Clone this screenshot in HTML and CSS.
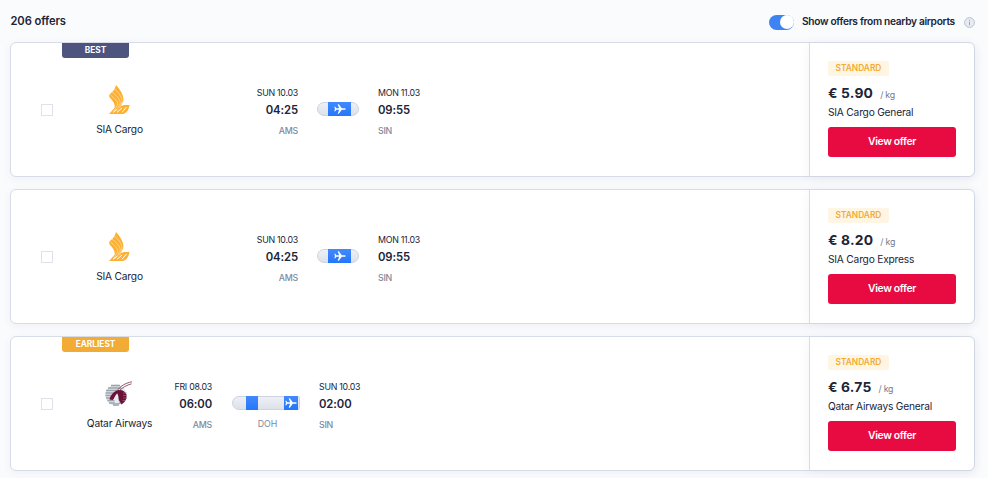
FILE: index.html
```html
<!DOCTYPE html>
<html lang="en">
<head>
<meta charset="utf-8">
<title>Offers</title>
<link rel="stylesheet" href="styles.css">
</head>
<body>
<svg class="defs" width="0" height="0">
  <symbol id="plane" viewBox="0 0 12 10"><path d="M.3 2.8h1l1 1.4h2.8L3.7.2h1.1l3 4h2.700c1.600 0 1.600 1.600 0 1.600H7.800l-3 4H3.700l1.400-4H2.300l-1 1.400h-1L1 5z" fill="#fff"/></symbol>
  <symbol id="sia" viewBox="0 0 22 30">
    <path d="M8 0C12 4 15 9 15.500 14C15.700 17 13 20 12 23L5 27C8 21 7 19 3 14C0 11 1 10 3 8C6 6 7 3 8 0Z" fill="#fdb134"/>
    <path d="M1 29L6 23.500L16 20H21.500C21 24 19 28 15 29Z" fill="#fdb134"/>
    <path d="M2.500 10C6 13 11 17 9.500 20L6 26M4 7C9 11 13 15 12 19L9 25M6.500 4C11 8 15 13 13.700 18L11.500 23" fill="none" stroke="#ffe3b0" stroke-width=".7"/>
    <path d="M5 27.300L9 24.500M9 27.300L14 23M14 27.300L18.500 22" fill="none" stroke="#fff" stroke-width="1"/>
  </symbol>
  <symbol id="qatar" viewBox="0 0 28 26">
    <circle cx="10.800" cy="14" r="10.500" fill="#e1e4e8"/>
    <path d="M6 4.500h9M3 7h13M1 9.500h13M.5 12h10M.5 14.500h6M1 17h5M2.500 19.500h12M4 22h12M8 24h6" stroke="#9aa2ac" stroke-width="1.300"/>
    <path d="M9 18L11 13.500L13 13L14 22H10Z" fill="#e9ebee"/>
    <path d="M4.500 18.500C5.500 14 9 10 13.500 9C17 8.500 20 10 21.500 13.500V17.500L19.500 21L16.500 23.500C15.500 21 13 19 13.500 16L12.500 12.500C10 13.500 9.500 18 7.500 19Z" fill="#6b1137"/>
    <path d="M12 10C15 5.500 20 2 27 .8M14.500 9.500C17.500 6.500 22 4 26.500 2.800" fill="none" stroke="#8a4764" stroke-width=".9"/>
    <path d="M18 12h4M18 14.500h4M18 17h4M17.500 19.500h3" stroke="#b58a9d" stroke-width=".5"/>
  </symbol>
</svg>
<header class="top">
  <h1 class="count">206 offers</h1>
  <div class="nearby">
    <span class="toggle"><span class="knob"></span></span>
    <span class="nearby-label">Show offers from nearby airports</span>
    <svg class="info" viewBox="0 0 11 11"><circle cx="5.500" cy="5.500" r="4.900" fill="#e8ebf1" stroke="#b9c2cd"/><path d="M5.500 2.800v1M5.500 4.700v3.500" stroke="#9ba6b8"/></svg>
  </div>
</header>
<main class="offers">
  <article class="card">
    <div class="main">
      <span class="check"></span>
      <div class="airline"><span class="ribbon best">BEST</span><svg class="logo sia"><use href="#sia"/></svg><span class="airline-name">SIA Cargo</span></div>
      <div class="stop from"><span class="date">SUN 10.03</span><span class="time">04:25</span><span class="code">AMS</span></div>
      <div class="route"><div class="bar"><span class="flight"><svg class="plane"><use href="#plane"/></svg></span></div></div>
      <div class="stop"><span class="date">MON 11.03</span><span class="time">09:55</span><span class="code">SIN</span></div>
    </div>
    <div class="price">
      <span class="tag">STANDARD</span>
      <div class="amount"><b class="value">€ 5.90</b><span class="unit">/ kg</span></div>
      <span class="product">SIA Cargo General</span>
      <button class="view">View offer</button>
    </div>
  </article>
  <article class="card">
    <div class="main">
      <span class="check"></span>
      <div class="airline"><svg class="logo sia"><use href="#sia"/></svg><span class="airline-name">SIA Cargo</span></div>
      <div class="stop from"><span class="date">SUN 10.03</span><span class="time">04:25</span><span class="code">AMS</span></div>
      <div class="route"><div class="bar"><span class="flight"><svg class="plane"><use href="#plane"/></svg></span></div></div>
      <div class="stop"><span class="date">MON 11.03</span><span class="time">09:55</span><span class="code">SIN</span></div>
    </div>
    <div class="price">
      <span class="tag">STANDARD</span>
      <div class="amount"><b class="value">€ 8.20</b><span class="unit">/ kg</span></div>
      <span class="product">SIA Cargo Express</span>
      <button class="view">View offer</button>
    </div>
  </article>
  <article class="card transfer">
    <div class="main">
      <span class="check"></span>
      <div class="airline"><span class="ribbon earliest">EARLIEST</span><svg class="logo qatar"><use href="#qatar"/></svg><span class="airline-name">Qatar Airways</span></div>
      <div class="stop from"><span class="date">FRI 08.03</span><span class="time">06:00</span><span class="code">AMS</span></div>
      <div class="route"><div class="bar"><span class="leg"></span><span class="flight"><svg class="plane"><use href="#plane"/></svg></span></div><span class="via">DOH</span></div>
      <div class="stop"><span class="date">SUN 10.03</span><span class="time">02:00</span><span class="code">SIN</span></div>
    </div>
    <div class="price">
      <span class="tag">STANDARD</span>
      <div class="amount"><b class="value">€ 6.75</b><span class="unit">/ kg</span></div>
      <span class="product">Qatar Airways General</span>
      <button class="view">View offer</button>
    </div>
  </article>
</main>
</body>
</html>
```
FILE: styles.css
```css
* { box-sizing: border-box; }
body {
  margin: 0;
  height: 478px;
  overflow: hidden;
  background: #fafbfd;
  color: #202438;
  font-family: Inter, "Liberation Sans", sans-serif;
  font-size: 10.5px;
}
.defs { position: absolute; }
.top {
  height: 42px;
  padding: 0 13px 0 10.5px;
  display: flex;
  justify-content: space-between;
}
.count { margin: 0; font-size: 11.2px; font-weight: 600; line-height: 43px; letter-spacing: -.1px; }
.nearby { display: flex; align-items: center; height: 44px; }
.toggle {
  width: 25px;
  height: 15px;
  border-radius: 8px;
  background: #3e83f4;
  padding: .5px;
  display: flex;
  justify-content: flex-end;
}
.knob { width: 14px; height: 14px; border-radius: 50%; background: #fff; }
.nearby-label { width: 155px; margin: -2px 7px 0 8px; font-weight: 600; font-size: 10.2px; letter-spacing: -.32px; white-space: nowrap; }
.info { width: 11px; height: 11px; }
.offers { display: flex; flex-direction: column; gap: 12px; padding: 0 13px 0 10px; }
.card {
  height: 135px;
  border: 1px solid #d8dce7;
  border-radius: 6px;
  background: #fff;
  display: flex;
  box-shadow: 0 2px 10px rgba(60, 75, 115, .06);
}
.main { flex: 1; display: flex; align-items: flex-start; }
.check { width: 12px; height: 12px; margin: 61px 16px 0 30px; border: 1px solid #dfe2ea; }
.airline {
  position: relative;
  width: 101px;
  height: 133px;
  padding-top: 42px;
  display: flex;
  flex-direction: column;
  align-items: center;
}
.ribbon {
  position: absolute;
  top: 0;
  left: -7px;
  width: 67px;
  height: 15px;
  border-radius: 0 0 3px 3px;
  color: #fff;
  font-size: 8.3px;
  font-weight: 700;
  line-height: 15px;
  text-align: center;
}
.best { background: #4d557e; }
.earliest { background: #f2ab34; }
.logo { display: block; }
.sia { width: 22px; height: 30px; margin: 0 2px 0 0; }
.qatar { width: 28px; height: 26px; margin: 2px 2px 2px 0; }
.airline-name { margin-top: 6px; line-height: 16px; font-size: 10.2px; letter-spacing: -.18px; white-space: nowrap; }
.stop { display: flex; flex-direction: column; padding-top: 43px; white-space: nowrap; }
.from { width: 128px; align-items: flex-end; }
.transfer .from { width: 42px; }
.date { font-size: 8.8px; line-height: 14px; letter-spacing: -.25px; }
.time { font-size: 11.3px; font-weight: 600; line-height: 20px; letter-spacing: -.1px; }
.code { margin-top: 4px; font-size: 8.8px; line-height: 14px; color: #7d8a9e; font-weight: 500; letter-spacing: -.25px; }
.route { width: 42px; margin: 59px 19px 0; display: flex; flex-direction: column; align-items: center; }
.transfer .route { width: 68px; margin-left: 20px; }
.bar {
  width: 100%;
  height: 14px;
  border: 1px solid #cdd3e0;
  border-radius: 7px;
  background: linear-gradient(#eef0f6, #dde1e9);
  display: flex;
}
.flight {
  width: 23px;
  height: 14px;
  margin: -1px 0 0 10px;
  background: linear-gradient(#4389ff, #2476fb);
  display: flex;
  align-items: center;
  justify-content: center;
}
.plane { width: 12px; height: 10px; margin: 0 0 1px 1px; }
.transfer .bar { border-radius: 7px 2px 2px 7px; }
.leg { width: 12px; height: 14px; margin: -1px 0 0 13px; background: linear-gradient(#4389ff, #2476fb); }
.transfer .flight { width: 14px; margin-left: 26px; }
.transfer .plane { margin: 0 1px 1px 0; }
.via { margin: 7px 0 0 3px; font-size: 8.8px; line-height: 14px; color: #7d8a9e; letter-spacing: -.05px; }
.price {
  width: 165px;
  border-left: 1px solid #d8dce7;
  border-radius: 0 6px 6px 0;
  padding: 18px 18px 0;
  display: flex;
  flex-direction: column;
  align-items: flex-start;
  box-shadow: 0 2px 12px rgba(60, 75, 115, .06);
}
.tag { width: 61px; height: 15px; border-radius: 2px; background: #fff5e3; color: #f2ab34; font-size: 8.4px; line-height: 15px; font-weight: 600; text-align: center; letter-spacing: -.03px; }
.amount { display: flex; align-items: baseline; gap: 7px; height: 24px; line-height: 24px; margin-top: 5px; }
.value { font-size: 13.8px; letter-spacing: .2px; }
.unit { font-size: 8.8px; color: #6f7b8e; letter-spacing: -.2px; }
.product { margin-top: -1px; line-height: 16px; font-size: 10.2px; letter-spacing: -.2px; white-space: nowrap; }
.view {
  width: 128px;
  height: 30px;
  margin-top: 7px;
  border: 0;
  border-radius: 3px;
  background: #e80b41;
  color: #fff;
  font: 600 10.4px/30px Inter, "Liberation Sans", sans-serif;
  letter-spacing: -.35px;
  padding: 0;
}
```
